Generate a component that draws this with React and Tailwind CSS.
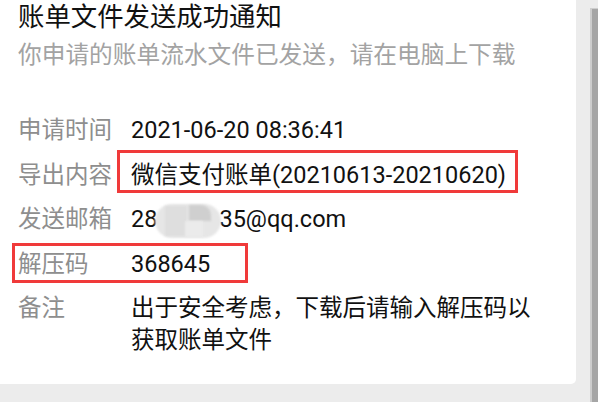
import React from 'react';

const font = { fontFamily: 'Roboto, "Noto Sans CJK SC", sans-serif' };

const rows = [
  { label: '申请时间', value: '2021-06-20 08:36:41', h: 'h-[45px] leading-[45px]' },
  { label: '导出内容', value: '微信支付账单(20210613-20210620)', h: 'h-[44px] leading-[44px]', mark: 'top-[-3px] left-[99px] w-[401px] h-[43px]' },
  { label: '发送邮箱', email: true, h: 'h-[45px] leading-[45px]' },
  { label: '解压码', value: '368645', h: 'h-[44px] leading-[44px]', mark: 'top-[1px] left-[-6px] w-[236px] h-[40px]' },
];

const Blur = () => (
  <span className="relative inline-block w-[66px] h-[34px] -mx-[2px] align-middle">
    <span className="absolute inset-0 rounded-[17px] bg-[#e6e6e6] blur-[1px]" />
    <span className="absolute left-[10px] top-[2px] w-[22px] h-[30px] bg-[#dedede] blur-[1px]" />
    <span className="absolute left-[34px] top-[1px] w-[22px] h-[16px] bg-[#cfcfcf] blur-[1px] rounded-tr-[10px]" />
    <span className="absolute left-[30px] top-[17px] w-[18px] h-[16px] bg-[#ebebeb] blur-[1px]" />
  </span>
);

export default function App() {
  return (
    <div className="w-[598px] h-[402px] bg-[#ececec] flex overflow-hidden" style={font}>
      <div className="w-[576px] shrink-0 h-[384px] bg-white rounded-br-[5px] pl-[18px] flex flex-col">
        <div className="h-[34px] leading-[34px] text-[26.4px] text-[#111]">账单文件发送成功通知</div>
        <div className="h-[42px] leading-[42px] text-[23.7px] text-[#a3a3a3]">你申请的账单流水文件已发送，请在电脑上下载</div>

        <div className="mt-[32px] flex flex-col text-[23.5px]">
          {rows.map((r) => (
            <div key={r.label} className={`relative flex ${r.h}`}>
              <div className="w-[113px] text-[#8e8e8e]">{r.label}</div>
              <div className="text-[#111] whitespace-nowrap">
                {r.email ? (
                  <span>28<Blur />35@qq.com</span>
                ) : (
                  r.value
                )}
              </div>
              {r.mark && (
                <div className={`absolute border-[3px] border-[#f03a3a] ${r.mark}`} />
              )}
            </div>
          ))}
          <div className="flex mt-[6px] leading-[32px]">
            <div className="w-[113px] shrink-0 text-[#8e8e8e]">备注</div>
            <div className="w-[410px] text-[#111]">出于安全考虑，下载后请输入解压码以获取账单文件</div>
          </div>
        </div>
      </div>
      <div className="w-[22px] shrink-0 h-[402px] pl-[14px] pt-[8px]">
        <div className="w-[8px] h-[394px] bg-[#a6a6a6] border-l-2 border-t border-[#cdcdcd]"></div>
      </div>
    </div>
  );
}
